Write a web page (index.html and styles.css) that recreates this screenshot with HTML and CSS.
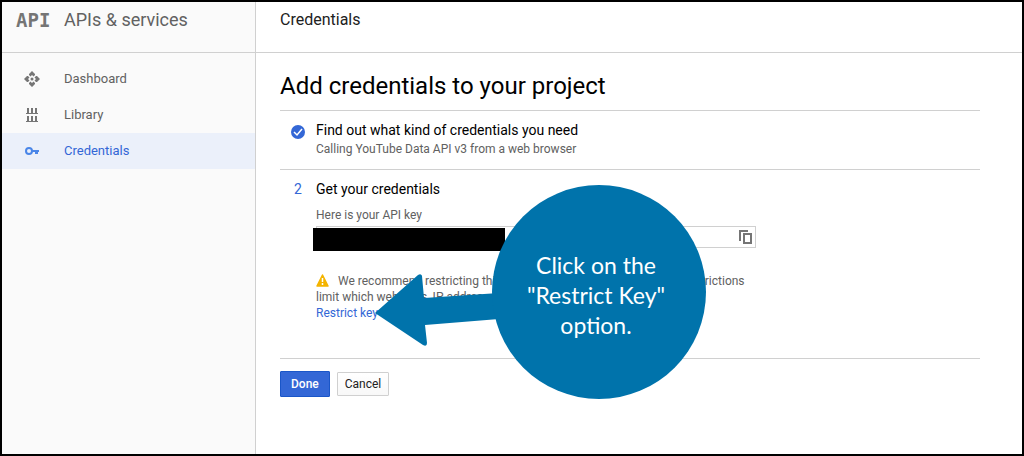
FILE: index.html
```html
<!DOCTYPE html>
<html lang="en">
<head>
    <meta charset="UTF-8">
    <meta name="viewport" content="width=device-width, initial-scale=1.0">
    <title>Credentials - APIs &amp; services</title>
    <link rel="stylesheet" href="styles.css">
</head>
<body>
    <div class="console">
        <aside class="sidebar">
            <div class="sidebar-header">
                <span class="logo">API</span>
                <span class="product">APIs &amp; services</span>
            </div>
            <nav class="nav">
                <a class="nav-item" href="#">
                    <svg class="nav-icon" width="16" height="16" viewBox="0 0 16 16" fill="#757575">
                        <path d="M8 0l3 3v1L9.500 5.500 8 4 6.500 5.500 5 4V3zM8 16l3-3v-1l-1.500-1.500L8 12l-1.500-1.500L5 12v1zM0 8l3-3h1l1.500 1.500L4 8l1.500 1.500L4 11H3zM16 8l-3-3h-1l-1.500 1.500L12 8l-1.500 1.500L12 11h1z"/>
                        <circle cx="8" cy="8" r="1.500"/>
                    </svg>
                    <span>Dashboard</span>
                </a>
                <a class="nav-item" href="#">
                    <svg class="nav-icon" width="16" height="16" viewBox="0 0 16 16" fill="#757575">
                        <path d="M3 1h2v5h2V1h2v5h2V1h2v5h1v1H2V6h1zM3 9h2v5h2V9h2v5h2V9h2v5h1v1H2v-1h1z"/>
                    </svg>
                    <span>Library</span>
                </a>
                <a class="nav-item active" href="#">
                    <svg class="nav-icon" width="16" height="16" viewBox="0 0 16 16">
                        <circle cx="5" cy="8" r="3" fill="none" stroke="#4a86e8" stroke-width="2"/>
                        <path d="M8 7h7v2h-1v2h-3V9H8z" fill="#4a86e8"/>
                    </svg>
                    <span>Credentials</span>
                </a>
            </nav>
        </aside>

        <main class="main">
            <header class="main-header">Credentials</header>
            <div class="content">
                <h1>Add credentials to your project</h1>

                <section class="step">
                    <div class="step-mark">
                        <svg width="14" height="14" viewBox="0 0 14 14">
                            <circle cx="7" cy="7" r="7" fill="#3367d6"/>
                            <path d="M3 7l3 3 5-6" fill="none" stroke="#fff" stroke-width="1.500"/>
                        </svg>
                    </div>
                    <div class="step-body">
                        <h2>Find out what kind of credentials you need</h2>
                        <p class="step-note">Calling YouTube Data API v3 from a web browser</p>
                    </div>
                </section>

                <section class="step step-current">
                    <div class="step-mark">2</div>
                    <div class="step-body">
                        <h2>Get your credentials</h2>
                        <label for="apiKey">Here is your API key</label>
                        <div class="key-field">
                            <input type="text" id="apiKey" readonly>
                            <button type="button" class="copy" aria-label="Copy">
                                <svg width="14" height="14" viewBox="0 0 14 14" fill="none" stroke="#757575" stroke-width="2">
                                    <path d="M1 11V1h8"/>
                                    <path d="M5 4h7v9H5z"/>
                                </svg>
                            </button>
                            <div class="redacted"></div>
                        </div>
                        <p class="warning">
                            <svg class="warning-icon" width="13" height="13" viewBox="0 0 13 13">
                                <path d="M6.500 1L12 12H1z" fill="#f4b400" stroke="#f4b400" stroke-width="1.500" stroke-linejoin="round"/>
                                <path d="M6.500 4v4M6.500 9v2" stroke="#fff" stroke-width="1.500"/>
                            </svg>
                            We recommend restricting this key before using it in production. Restrictions<br>
                            limit which web sites, IP addresses, or apps can use it.
                        </p>
                        <a class="restrict" href="#">Restrict key</a>
                    </div>
                </section>

                <div class="actions">
                    <button type="button" class="btn btn-primary">Done</button>
                    <button type="button" class="btn">Cancel</button>
                </div>
            </div>

            <!-- tutorial callout pointing at the restrict link -->
            <div class="callout">
                <svg class="callout-shape" width="332" height="216" viewBox="0 0 332 216" fill="#0073ab">
                    <path d="M0 129L43 91q3-2 4 1l2 22 75-5v26l-74 6 2 18q0 4-4 2z"/>
                    <circle cx="224" cy="108" r="107"/>
                </svg>
                <div class="callout-text">Click on the<br>"Restrict Key"<br>option.</div>
            </div>
        </main>
    </div>
</body>
</html>
```

FILE: styles.css
```css
* {
    box-sizing: border-box;
    margin: 0;
    padding: 0;
}

body {
    font-family: Roboto, "Liberation Sans", sans-serif;
    font-size: 12px;
    line-height: 16px;
    color: #616161;
    background: #fff;
}

a {
    color: #3367d6;
    text-decoration: none;
}

.console {
    display: flex;
    min-height: 100vh;
    border: 2px solid #000;
}

.sidebar {
    width: 254px;
    flex-shrink: 0;
    background: #fafafa;
    border-right: 1px solid #d0d0d0;
}

.sidebar-header,
.main-header {
    height: 51px;
    padding-top: 6px;
    line-height: 24px;
    font-size: 16px;
    border-bottom: 1px solid #d0d0d0;
}

.sidebar-header {
    display: flex;
    padding-left: 14px;
    font-size: 18px;
}

.logo {
    width: 48px;
    font-family: "DejaVu Sans Mono", monospace;
    font-size: 19px;
    font-weight: bold;
    color: #757575;
}

.nav {
    padding-top: 8px;
}

.nav-item {
    display: flex;
    align-items: center;
    height: 36px;
    padding-left: 22px;
    font-size: 13px;
    color: #616161;
}

.nav-icon {
    margin-right: 24px;
}

.nav-item.active {
    color: #3367d6;
    background: #ebf0fa;
}

.main {
    flex: 1;
    position: relative;
}

.main-header {
    padding-left: 24px;
    color: #212121;
}

.content {
    padding: 17px 42px 0 24px;
}

h1 {
    padding-bottom: 8px;
    font-size: 24px;
    line-height: 32px;
    font-weight: normal;
    color: #000;
}

.step {
    display: flex;
    padding: 9px 0;
    border-top: 1px solid #d0d0d0;
    min-height: 59px;
}

.step-mark {
    width: 36px;
    flex-shrink: 0;
    text-align: center;
    font-size: 14px;
    line-height: 20px;
    color: #3367d6;
}

.step-mark svg {
    display: block;
    margin: 5px auto 0;
}

h2 {
    font-size: 14px;
    line-height: 20px;
    font-weight: normal;
    color: #000;
}

.step-note {
    margin-top: 1px;
}

.step-current {
    min-height: 189px;
}

.step-body {
    width: 440px;
}

label {
    display: block;
    margin: 8px 0 3px;
}

.key-field {
    display: flex;
    position: relative;
    height: 22px;
    border: 1px solid #d0d0d0;
}

.key-field input {
    flex: 1;
    min-width: 0;
    border: none;
    outline: none;
}

.copy {
    width: 16px;
    border: none;
    background: none;
}

.copy svg {
    display: block;
}

/* covers the key itself */
.redacted {
    position: absolute;
    top: 1px;
    left: -4px;
    width: 192px;
    height: 23px;
    background: #000;
}

.warning {
    margin-top: 25px;
}

.warning-icon {
    margin-right: 6px;
    vertical-align: -2px;
}

.actions {
    display: flex;
    align-items: center;
    gap: 7px;
    padding-top: 12px;
    border-top: 1px solid #d0d0d0;
}

.btn {
    height: 24px;
    padding: 0 7px;
    font-family: inherit;
    font-size: 12px;
    color: #212121;
    background: linear-gradient(#fff, #f8f8f8);
    border: 1px solid #d0d0d0;
    border-radius: 1px;
}

.btn-primary {
    height: 26px;
    padding: 0 10px;
    font-weight: 500;
    color: #fff;
    background: #3367d6;
    border-color: #1a56c8;
}

.callout {
    position: absolute;
    top: 182px;
    left: 119px;
    width: 332px;
    height: 216px;
}

.callout-shape {
    display: block;
}

.callout-text {
    position: absolute;
    top: 66px;
    left: 114px;
    width: 214px;
    font-family: Lato, "Open Sans", sans-serif;
    font-size: 23px;
    line-height: 30px;
    text-align: center;
    color: #fff;
}
```
